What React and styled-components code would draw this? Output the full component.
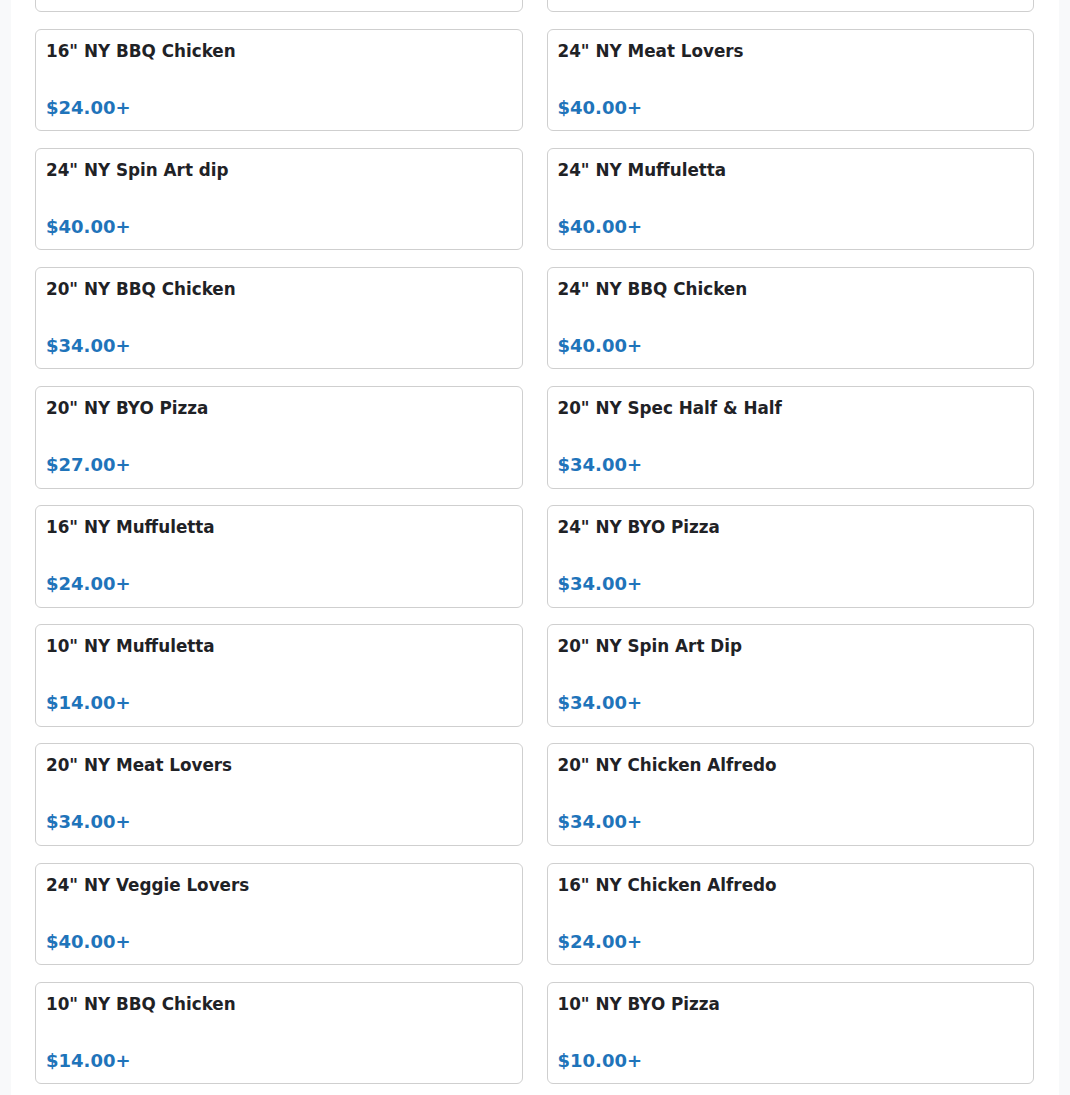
import React from "react";
import styled, { createGlobalStyle } from "styled-components";

const Global = createGlobalStyle`
  html, body { margin: 0; padding: 0; background: #f8f9fa; }
  body { font-family: "DejaVu Sans", "Liberation Sans", sans-serif; overflow: hidden; }
`;

const Page = styled.main`
  width: 1048px;
  margin: -90.5px auto 0;
  background: #ffffff;
  padding: 0 25px 40px 24px;
  box-sizing: border-box;
`;

const Grid = styled.div`
  display: grid;
  grid-template-columns: 1fr 1fr;
  column-gap: 24px;
  row-gap: 16.625px;
`;

const Card = styled.div`
  box-sizing: border-box;
  height: 102.5px;
  border: 1px solid #cfcfcf;
  border-radius: 6px;
  padding: 11px 10px 0;
  display: flex;
  flex-direction: column;
  background: #fff;
`;

const Title = styled.div`
  font-size: 16.8px;
  font-weight: 700;
  line-height: 20px;
  color: #1f2226;
`;

const Price = styled.div`
  margin-top: 36px;
  font-size: 18px;
  font-weight: 700;
  line-height: 21px;
  color: #1f74ba;
`;

const items = [
  ["10\" NY Veggie Lovers", "$14.00+"],
  ["16\" NY Veggie Lovers", "$24.00+"],
  ["16\" NY BBQ Chicken", "$24.00+"],
  ["24\" NY Meat Lovers", "$40.00+"],
  ["24\" NY Spin Art dip", "$40.00+"],
  ["24\" NY Muffuletta", "$40.00+"],
  ["20\" NY BBQ Chicken", "$34.00+"],
  ["24\" NY BBQ Chicken", "$40.00+"],
  ["20\" NY BYO Pizza", "$27.00+"],
  ["20\" NY Spec Half & Half", "$34.00+"],
  ["16\" NY Muffuletta", "$24.00+"],
  ["24\" NY BYO Pizza", "$34.00+"],
  ["10\" NY Muffuletta", "$14.00+"],
  ["20\" NY Spin Art Dip", "$34.00+"],
  ["20\" NY Meat Lovers", "$34.00+"],
  ["20\" NY Chicken Alfredo", "$34.00+"],
  ["24\" NY Veggie Lovers", "$40.00+"],
  ["16\" NY Chicken Alfredo", "$24.00+"],
  ["10\" NY BBQ Chicken", "$14.00+"],
  ["10\" NY BYO Pizza", "$10.00+"],
];

export default function App() {
  return (
    <>
      <Global />
      <Page>
        <Grid>
          {items.map(([name, price], i) => (
            <Card key={i}>
              <Title>{name}</Title>
              <Price>{price}</Price>
            </Card>
          ))}
        </Grid>
      </Page>
    </>
  );
}
